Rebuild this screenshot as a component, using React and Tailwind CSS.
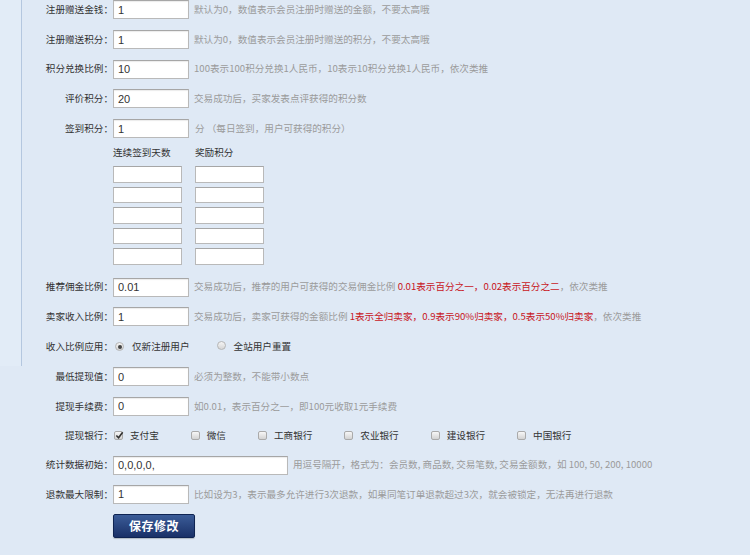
import React from "react";

const Input = ({ value, w = "w-[76px]" }) => (
  <input
    defaultValue={value}
    className={`${w} h-[19px] border border-[#b9b9b9] border-t-[#a6a6a6] bg-white px-[4px] text-[11px] text-[#333] font-['Liberation_Sans',sans-serif] shadow-[inset_0_1px_1px_rgba(0,0,0,0.08)] outline-none`}
  />
);

const Hint = ({ children, ml = "ml-[5px]" }) => (
  <span className={`${ml} text-[#9b9b9b] whitespace-nowrap`}>{children}</span>
);

const Red = ({ children }) => <span className="text-[#c8161d]">{children}</span>;

const Row = ({ label, children, h = "h-[29.7px]" }) => (
  <div className={`flex items-center ${h}`}>
    <div className="w-[91px] text-right text-[#333] whitespace-nowrap">{label}</div>
    {children}
  </div>
);

const Radio = ({ checked }) => (
  <span className="inline-flex items-center justify-center w-[9px] h-[9px] rounded-full border border-[#b5b5b5] bg-gradient-to-b from-[#f4f4f4] to-[#d6d6d6]">
    {checked && <span className="w-[4px] h-[4px] rounded-full bg-[#444]" />}
  </span>
);

const Check = ({ checked }) => (
  <span className="relative inline-block w-[9px] h-[9px] rounded-[2px] border border-[#aaa] bg-gradient-to-b from-[#f7f7f7] to-[#d3d3d3]">
    {checked && (
      <svg viewBox="0 0 10 10" className="absolute left-[0px] top-[-1px] w-[9px] h-[9px]">
        <path d="M1.5 5 L4 7.5 L8.5 1.5" stroke="#333" strokeWidth="1.8" fill="none" />
      </svg>
    )}
  </span>
);

const SmallInput = () => (
  <input className="w-[69px] h-[16.5px] border border-[#b9b9b9] border-t-[#a6a6a6] bg-white outline-none" />
);

export default function App() {
  const banks = ["支付宝", "微信", "工商银行", "农业银行", "建设银行", "中国银行"];
  return (
    <div className="w-[750px] h-[555px] overflow-hidden bg-[#dfe9f5] text-[9.6px] leading-none font-['Noto_Sans_CJK_SC',sans-serif] flex">
      <div className="w-[22px] shrink-0">
        <div className="h-[366px] border-r border-[#b4c7df] bg-[#e2ecf7]" />
      </div>
      <div className="flex flex-col mt-[-5px]">
        <Row label="注册赠送金钱：">
          <Input value="1" />
          <Hint>默认为0，数值表示会员注册时赠送的金额，不要太高哦</Hint>
        </Row>
        <Row label="注册赠送积分：">
          <Input value="1" />
          <Hint>默认为0，数值表示会员注册时赠送的积分，不要太高哦</Hint>
        </Row>
        <Row label="积分兑换比例：">
          <Input value="10" />
          <Hint>100表示100积分兑换1人民币，10表示10积分兑换1人民币，依次类推</Hint>
        </Row>
        <Row label="评价积分：">
          <Input value="20" />
          <Hint>交易成功后，买家发表点评获得的积分数</Hint>
        </Row>
        <Row label="签到积分：">
          <Input value="1" />
          <Hint ml="ml-[6px]">分 （每日签到，用户可获得的积分）</Hint>
        </Row>
        <div className="pl-[91px]">
          <div className="flex items-center h-[18px] text-[#333]">
            <span className="w-[82px]">连续签到天数</span>
            <span>奖励积分</span>
          </div>
          <div className="mt-[5px] grid grid-cols-[69px_69px] gap-x-[13px] gap-y-[4px]">
            {Array.from({ length: 10 }).map((_, i) => (
              <SmallInput key={i} />
            ))}
          </div>
        </div>
        <div className="mt-[7.5px] flex flex-col">
          <Row label="推荐佣金比例：" h="h-[29.4px]">
            <Input value="0.01" />
            <Hint>
              交易成功后，推荐的用户可获得的交易佣金比例 <Red>0.01表示百分之一，0.02表示百分之二</Red>，依次类推
            </Hint>
          </Row>
          <Row label="卖家收入比例：" h="h-[29.4px]">
            <Input value="1" />
            <Hint>
              交易成功后，卖家可获得的金额比例 <Red>1表示全归卖家，0.9表示90%归卖家，0.5表示50%归卖家</Red>，依次类推
            </Hint>
          </Row>
          <Row label="收入比例应用：" h="h-[31px]">
            <div className="flex items-center ml-[2px] text-[#333]">
              <Radio checked />
              <span className="ml-[8px]">仅新注册用户</span>
              <span className="ml-[27px]"><Radio /></span>
              <span className="ml-[8px]">全站用户重置</span>
            </div>
          </Row>
          <Row label="最低提现值：" h="h-[29.4px]">
            <Input value="0" />
            <Hint>必须为整数，不能带小数点</Hint>
          </Row>
          <Row label="提现手续费：" h="h-[29.4px]">
            <Input value="0" />
            <Hint>如0.01，表示百分之一，即100元收取1元手续费</Hint>
          </Row>
          <Row label="提现银行：" h="h-[29.4px]">
            <div className="flex items-center ml-[1px] text-[#333]">
              {banks.map((b, i) => (
                <span key={b} className={`flex items-center ${i > 0 ? "ml-[32px]" : ""}`}>
                  <Check checked={i === 0} />
                  <span className="ml-[7px]">{b}</span>
                </span>
              ))}
            </div>
          </Row>
          <Row label="统计数据初始：" h="h-[29.4px]">
            <Input value="0,0,0,0," w="w-[175px]" />
            <Hint>用逗号隔开，格式为：会员数, 商品数, 交易笔数, 交易金额数，如 100, 50, 200, 10000</Hint>
          </Row>
          <Row label="退款最大限制：" h="h-[29.4px]">
            <Input value="1" />
            <Hint>比如设为3，表示最多允许进行3次退款，如果同笔订单退款超过3次，就会被锁定，无法再进行退款</Hint>
          </Row>
          <div className="pl-[91px] mt-[5px]">
            <button className="w-[82px] h-[24px] rounded-[2px] border border-[#0f2452] bg-gradient-to-b from-[#3b5c98] to-[#1a3168] text-white text-[12px] font-bold tracking-[0.5px] shadow-[0_1px_1px_rgba(0,0,0,0.2)]">
              保存修改
            </button>
          </div>
        </div>
      </div>
    </div>
  );
}
